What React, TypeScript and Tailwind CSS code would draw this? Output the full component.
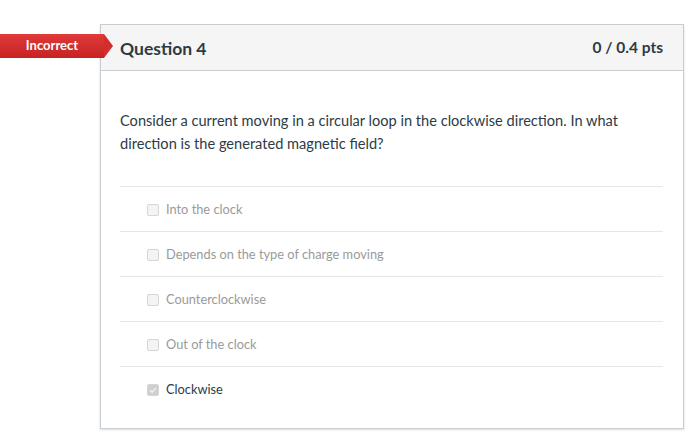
import React from "react";

const answers = [
  { text: "Into the clock", selected: false },
  { text: "Depends on the type of charge moving", selected: false },
  { text: "Counterclockwise", selected: false },
  { text: "Out of the clock", selected: false },
  { text: "Clockwise", selected: true },
];

function Box({ checked }: { checked: boolean }) {
  return (
    <span className="relative inline-block w-[12px] h-[12px] rounded-[2px] border border-[#d6d6d6] bg-[#f4f4f4] mr-[7px] shrink-0">
      {checked && (
        <svg viewBox="0 0 12 12" className="absolute inset-0 w-full h-full">
          <rect x="0" y="0" width="12" height="12" fill="#cfcfcf" />
          <path d="M2.5 6.2 L5 8.6 L9.6 3.4" stroke="#f4f4f4" strokeWidth="1.6" fill="none" />
        </svg>
      )}
    </span>
  );
}

export default function App() {
  return (
    <div className="relative w-[700px] h-[434px] bg-white overflow-hidden" style={{ fontFamily: "Lato, 'Noto Sans', sans-serif" }}>
      <div className="pt-[24px] pl-[100px]">
        <div className="w-[584px] border border-[#c7cdd1] shadow-[0_1px_2px_rgba(0,0,0,0.15)] bg-white">
          <div className="h-[46px] bg-[#f5f5f5] border-b border-[#c7cdd1] flex items-center justify-between pl-[19px] pr-[20px]">
            <span className="text-[17.5px] font-bold text-[#2d3b45] translate-y-[2px]">Question 4</span>
            <span className="text-[15.5px] font-bold text-[#2d3b45]">0 / 0.4 pts</span>
          </div>
          <div className="pl-[19px] pr-[20px] pt-[38px] pb-[17px]">
            <p className="text-[14.6px] leading-[23px] text-[#2d3b45]">
              Consider a current moving in a circular loop in the clockwise direction. In what direction is the generated magnetic field?
            </p>
            <div className="mt-[31px]">
              {answers.map((a) => (
                <div key={a.text} className="h-[45px] border-t border-[#e6e6e6] flex items-center pl-[27px] pt-[1px]">
                  <Box checked={a.selected} />
                  <span className={"text-[12.8px] " + (a.selected ? "text-[#2d3b45]" : "text-[#9a9a9a]")}>{a.text}</span>
                </div>
              ))}
            </div>
          </div>
        </div>
      </div>
      <div className="absolute left-0 top-[34px] h-[24px] w-[113px] flex items-center">
        <div className="h-full w-[104px] bg-gradient-to-b from-[#e03a3a] to-[#c62222] flex items-center justify-center">
          <span className="text-[13px] font-bold text-white">Incorrect</span>
        </div>
        <div className="w-0 h-0 border-y-[12px] border-y-transparent border-l-[9px] border-l-[#d22e2e]" />
      </div>
    </div>
  );
}
